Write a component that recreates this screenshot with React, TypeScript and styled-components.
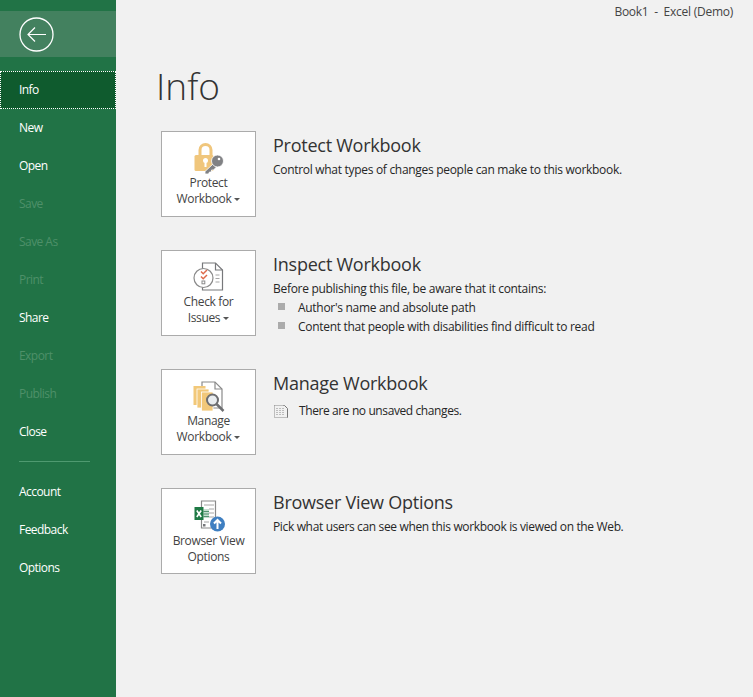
import React, { FC, ReactNode } from 'react'
import styled, { createGlobalStyle } from 'styled-components'

const Global = createGlobalStyle`
  html, body { margin: 0; padding: 0; height: 100%; background: #f1f1f1; }
  body { font-family: "Open Sans", "Noto Sans", "Liberation Sans", sans-serif; }
  #root { height: 100%; }
`

const Page = styled.div`
  display: flex;
  width: 753px;
  height: 697px;
  overflow: hidden;
  background: #f1f1f1;
`

const Sidebar = styled.div`
  width: 116px;
  height: 100%;
  flex-shrink: 0;
  background: #217346;
  padding-top: 11px;
  box-sizing: border-box;
`

const BackRow = styled.div`
  height: 46px;
  margin-bottom: 14px;
  padding-left: 19px;
  display: flex;
  align-items: center;
  background: #43815f;
`

const NavItem = styled.div<{ $active?: boolean; $disabled?: boolean }>`
  height: 38px;
  padding: 0 0 2px ${p => (p.$active ? '18px' : '19px')};
  display: flex;
  align-items: center;
  box-sizing: border-box;
  font-size: 12px;
  letter-spacing: -0.55px;
  color: ${p => (p.$disabled ? '#4e9069' : '#fff')};
  background: ${p => (p.$active ? '#0f5b2e' : 'transparent')};
  border: ${p => (p.$active ? '1px dotted #fff' : 'none')};
`

const NavRule = styled.div`
  height: 1px;
  width: 71px;
  margin: 10px 0 11px 19px;
  background: #4f9a70;
`

const Main = styled.div`
  flex: 1;
  min-width: 0;
  color: #262626;
`

const TitleBar = styled.div`
  height: 22px;
  padding-right: 20px;
  display: flex;
  justify-content: flex-end;
  align-items: center;
  font-size: 12px;
  letter-spacing: -0.25px;
  color: #444;
  white-space: pre;
`

const PageTitle = styled.h1`
  margin: 0 0 0 40px;
  height: 109px;
  padding-top: 32px;
  box-sizing: border-box;
  font-size: 37px;
  font-weight: 300;
  line-height: 64px;
  color: #333;
`

const Sections = styled.div`
  display: flex;
  flex-direction: column;
  gap: 33px;
  padding-left: 45px;
`

const Section = styled.div`
  display: flex;
  gap: 17px;
`

const ActionCard = styled.div`
  width: 95px;
  height: 86px;
  flex-shrink: 0;
  box-sizing: border-box;
  border: 1px solid #ababab;
  background: #fff;
  display: flex;
  flex-direction: column;
  align-items: center;
  padding-top: 9px;
  color: #444;
`

const CardIcon = styled.svg<{ $gap?: number }>`
  width: 34px;
  height: 34px;
  display: block;
  margin-bottom: ${p => p.$gap ?? 0}px;
`

const CardLabel = styled.div`
  font-size: 12px;
  line-height: 16px;
  text-align: center;
  white-space: nowrap;
  letter-spacing: -0.35px;
`

const Caret = styled.span`
  display: inline-block;
  margin-left: 3px;
  vertical-align: middle;
  border-left: 3px solid transparent;
  border-right: 3px solid transparent;
  border-top: 3px solid #555;
`

const Details = styled.div`
  padding-top: 2px;
`

const SectionTitle = styled.h2`
  margin: 0 0 2px;
  font-size: 18px;
  font-weight: 400;
  line-height: 25px;
  letter-spacing: -0.25px;
  color: #333;
`

const Description = styled.div<{ $tight?: boolean }>`
  font-size: 12px;
  line-height: 19px;
  letter-spacing: ${p => (p.$tight ? '-0.35px' : '-0.3px')};
`

const BulletRow = styled.div`
  display: flex;
  align-items: center;
  height: 19px;
  font-size: 12px;
  letter-spacing: -0.3px;
`

const Bullet = styled.span`
  width: 7px;
  height: 7px;
  margin: 0 13px 2px 5px;
  background: #ababab;
`

const StatusRow = styled.div`
  display: flex;
  align-items: center;
  margin-top: 5px;
  font-size: 12px;
  line-height: 19px;
  letter-spacing: -0.4px;
`

const StatusIcon = styled.svg`
  width: 16px;
  height: 16px;
  margin-right: 10px;
`

const LockIcon: FC = () => (
  <CardIcon viewBox="0 0 34 34">
    <path d="M8 15V9a5.5 5.5 0 0 1 11 0v6" fill="none" stroke="#f0c67c" strokeWidth="3" />
    <rect x="2.5" y="14" width="19" height="16" rx="1.5" fill="#f0c67c" />
    <circle cx="13.5" cy="19.5" r="2.5" fill="#fff" />
    <rect x="12.5" y="20" width="2" height="6" fill="#fff" />
    <path d="M21 23l-8 7.5V33h3.5l1-2h2v-2h2l3-3z" fill="#808184" stroke="#fff" strokeWidth=".8" />
    <circle cx="25.5" cy="20" r="6" fill="#808184" stroke="#fff" strokeWidth=".8" />
    <circle cx="27" cy="18" r="1.3" fill="#fff" />
  </CardIcon>
)

const InspectIcon: FC = () => (
  <CardIcon viewBox="0 0 34 34">
    <path d="M10.5 3h13l7 7v20h-20z" fill="#fff" stroke="#77787b" strokeWidth="1.2" />
    <path d="M23.5 3v7h7" fill="none" stroke="#77787b" strokeWidth="1.2" />
    <path d="M23.5 15h4M23.5 18.5h4M23.5 22h4" stroke="#a6a6a6" strokeWidth="1" />
    <circle cx="11.5" cy="18" r="9.5" fill="#fff" stroke="#8a8a8a" strokeWidth="1.2" />
    <path d="M9 11.5l2.2 2.2L15 10M9 16.5l2.2 2.2L15 15" fill="none" stroke="#de6a4b" strokeWidth="1.5" />
    <rect x="10" y="21" width="2.8" height="2.8" fill="none" stroke="#8a8a8a" />
  </CardIcon>
)

const ManageIcon: FC = () => (
  <CardIcon viewBox="0 0 34 34">
    <path d="M10 3h13l7 7v19H10z" fill="#fff" stroke="#8a8a8a" strokeWidth="1.2" />
    <path d="M23 3v7h7" fill="none" stroke="#8a8a8a" strokeWidth="1.2" />
    <rect x="1.5" y="7" width="12" height="19" fill="#f2c879" />
    <rect x="5" y="10" width="12" height="19" fill="#f2c879" stroke="#fff" strokeWidth=".8" />
    <rect x="9.5" y="13" width="11.5" height="19" fill="#f2c879" stroke="#fff" strokeWidth=".8" />
    <circle cx="20.5" cy="21" r="5.5" fill="#e9edf0" stroke="#6d6e71" strokeWidth="2" />
    <path d="M24.5 25l7 7" stroke="#6d6e71" strokeWidth="2.5" />
  </CardIcon>
)

const BrowserIcon: FC = () => (
  <CardIcon viewBox="0 0 34 34" $gap={1}>
    <path d="M9.5 3h14v27h-14z" fill="#fff" stroke="#8a8a8a" strokeWidth="1.2" />
    <path d="M12 7h10M17 11h5M17 15h5M17 19h5M12 24h5" stroke="#a6a6a6" strokeWidth="1" />
    <rect x="11.5" y="11" width="5.5" height="9" fill="#c5ded0" />
    <path d="M11.5 13.5h5.5M11.5 16h5.5M11.5 18.5h5.5" stroke="#217346" strokeWidth=".7" />
    <rect x="2.5" y="9" width="9" height="13" fill="#1f7a45" />
    <path d="M4.8 12.5l4.4 6.5M9.2 12.5l-4.4 6.5" stroke="#fff" strokeWidth="1.6" />
    <rect x="11" y="26" width="2.5" height="2.5" fill="#77787b" />
    <circle cx="25.5" cy="26" r="7.5" fill="#3f7fc1" />
    <path d="M25.5 31v-9M22 25.5l3.5-3.5 3.5 3.5" fill="none" stroke="#fff" strokeWidth="2" />
  </CardIcon>
)

const InfoSection: FC<{ icon: ReactNode; label: ReactNode; title: string; children: ReactNode }> = ({ icon, label, title, children }) => (
  <Section>
    <ActionCard>
      {icon}
      <CardLabel>{label}</CardLabel>
    </ActionCard>
    <Details>
      <SectionTitle>{title}</SectionTitle>
      {children}
    </Details>
  </Section>
)

const navTop = [
  { name: 'Info', active: true },
  { name: 'New' },
  { name: 'Open' },
  { name: 'Save', disabled: true },
  { name: 'Save As', disabled: true },
  { name: 'Print', disabled: true },
  { name: 'Share' },
  { name: 'Export', disabled: true },
  { name: 'Publish', disabled: true },
  { name: 'Close' },
]

const navBottom = ['Account', 'Feedback', 'Options']

const App: FC = () => (
  <>
    <Global />
    <Page>
      <Sidebar>
        <BackRow>
          <svg width="35" height="35" viewBox="0 0 35 35">
            <circle cx="17.5" cy="17.5" r="16.5" fill="none" stroke="#fff" strokeWidth="1.3" />
            <path d="M9 17.5h18M16 10.5l-7 7 7 7" fill="none" stroke="#fff" strokeWidth="1.2" />
          </svg>
        </BackRow>
        {navTop.map(item => (
          <NavItem key={item.name} $active={item.active} $disabled={item.disabled}>{item.name}</NavItem>
        ))}
        <NavRule />
        {navBottom.map(name => <NavItem key={name}>{name}</NavItem>)}
      </Sidebar>
      <Main>
        <TitleBar>Book1  -  Excel (Demo)</TitleBar>
        <PageTitle>Info</PageTitle>
        <Sections>
          <InfoSection icon={<LockIcon />} label={<>Protect<br />Workbook<Caret /></>} title="Protect Workbook">
            <Description>Control what types of changes people can make to this workbook.</Description>
          </InfoSection>
          <InfoSection icon={<InspectIcon />} label={<>Check for<br />Issues<Caret /></>} title="Inspect Workbook">
            <Description>Before publishing this file, be aware that it contains:</Description>
            <BulletRow><Bullet />Author's name and absolute path</BulletRow>
            <BulletRow><Bullet />Content that people with disabilities find difficult to read</BulletRow>
          </InfoSection>
          <InfoSection icon={<ManageIcon />} label={<>Manage<br />Workbook<Caret /></>} title="Manage Workbook">
            <StatusRow>
              <StatusIcon viewBox="0 0 16 16">
                <path d="M1.5 2.5h9M1.5 2.5v12h13v-8M4 5v7M7 5v7M10 5v7" fill="none" stroke="#888" strokeDasharray="1 1" />
                <path d="M10.5 2.5h1l3 3v9" fill="none" stroke="#777" />
              </StatusIcon>
              There are no unsaved changes.
            </StatusRow>
          </InfoSection>
          <InfoSection icon={<BrowserIcon />} label={<>Browser View<br />Options</>} title="Browser View Options">
            <Description $tight>Pick what users can see when this workbook is viewed on the Web.</Description>
          </InfoSection>
        </Sections>
      </Main>
    </Page>
  </>
)

export default App
